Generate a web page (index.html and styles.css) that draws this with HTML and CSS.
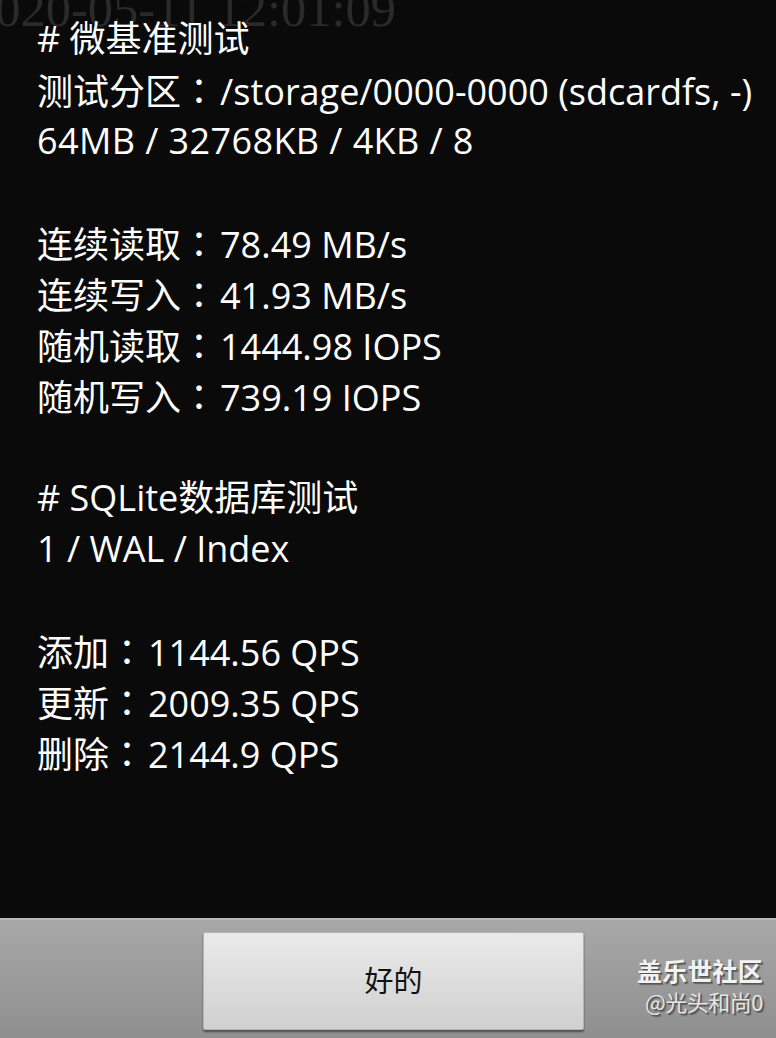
FILE: index.html
```html
<!DOCTYPE html>
<html lang="zh-CN">
<head>
<meta charset="utf-8">
<link rel="stylesheet" href="styles.css">
</head>
<body>
<div class="screen">
  <div class="stamp">2020-05-11 12:01:09</div>
  <div class="report">
    <div class="line"># 微基准测试</div>
    <div class="line">测试分区<span class="cp" lang="zh-TW">：</span>/storage/0000-0000 (sdcardfs, -)</div>
    <div class="line wide">64MB / 32768KB / 4KB / 8</div>
    <div class="line blank"></div>
    <div class="line">连续读取<span class="cp" lang="zh-TW">：</span>78.49 MB/s</div>
    <div class="line">连续写入<span class="cp" lang="zh-TW">：</span>41.93 MB/s</div>
    <div class="line">随机读取<span class="cp" lang="zh-TW">：</span>1444.98 IOPS</div>
    <div class="line">随机写入<span class="cp" lang="zh-TW">：</span>739.19 IOPS</div>
    <div class="line blank"></div>
    <div class="line"># SQLite数据库测试</div>
    <div class="line">1 / WAL / Index</div>
    <div class="line blank"></div>
    <div class="line">添加<span class="cp" lang="zh-TW">：</span>1144.56 QPS</div>
    <div class="line">更新<span class="cp" lang="zh-TW">：</span>2009.35 QPS</div>
    <div class="line">删除<span class="cp" lang="zh-TW">：</span>2144.9 QPS</div>
  </div>
  <div class="bar">
    <button class="ok">好的</button>
    <div class="mark">
      <div class="mark-title">盖乐世社区</div>
      <div class="mark-user">@光头和尚0</div>
    </div>
  </div>
</div>
</body>
</html>
```
FILE: styles.css
```css
html, body {
  margin: 0;
  padding: 0;
  background: #0a0a0a;
}
.screen {
  position: relative;
  width: 776px;
  height: 1038px;
  overflow: hidden;
  display: flex;
  flex-direction: column;
  background: #0a0a0a;
}
.stamp {
  position: absolute;
  left: -30px;
  top: -21px;
  font-family: "Liberation Serif", serif;
  font-size: 50.5px;
  line-height: 60px;
  color: #2a2a2a;
  white-space: nowrap;
}
.report {
  position: relative;
  flex: 1;
  padding: 13px 0 0 37px;
  font-family: "Open Sans", "Noto Sans CJK SC", sans-serif;
  font-size: 36px;
  line-height: 51px;
  color: #ffffff;
}
.line {
  height: 51px;
  white-space: nowrap;
}
.cp {
  font-family: "Noto Sans CJK TC", sans-serif;
  font-feature-settings: "locl" 1;
  margin-right: 3px;
}
.wide {
  letter-spacing: 0.4px;
}
.bar {
  height: 120px;
  flex: none;
  display: flex;
  align-items: flex-start;
  border-top: 2px solid #b9b9b9;
  box-sizing: border-box;
  background: linear-gradient(#a8a8a8, #8f8f8f);
  position: relative;
}
.ok {
  margin: 12px 0 0 203px;
  width: 381px;
  height: 98px;
  border: 1px solid #b4b4b4;
  border-radius: 2px;
  background: linear-gradient(#eaeaea, #d0d0d0);
  box-shadow: 0 2px 2px rgba(0,0,0,0.45);
  font-family: "Noto Sans CJK SC", sans-serif;
  font-size: 29px;
  color: #111;
  padding: 0 0 4px 0;
}
.mark {
  position: absolute;
  right: 13px;
  top: 34px;
  display: flex;
  flex-direction: column;
  align-items: flex-end;
  font-family: "Noto Sans CJK SC", sans-serif;
  color: #f2f2f2;
  text-shadow: 1px 1px 0 #555, 2px 2px 1px rgba(0,0,0,0.35);
}
.mark-title {
  font-size: 25px;
  font-weight: 700;
  line-height: 32px;
  letter-spacing: 0.2px;
}
.mark-user {
  font-size: 22px;
  line-height: 30px;
  color: #e6e6e6;
  letter-spacing: -0.5px;
}
```
